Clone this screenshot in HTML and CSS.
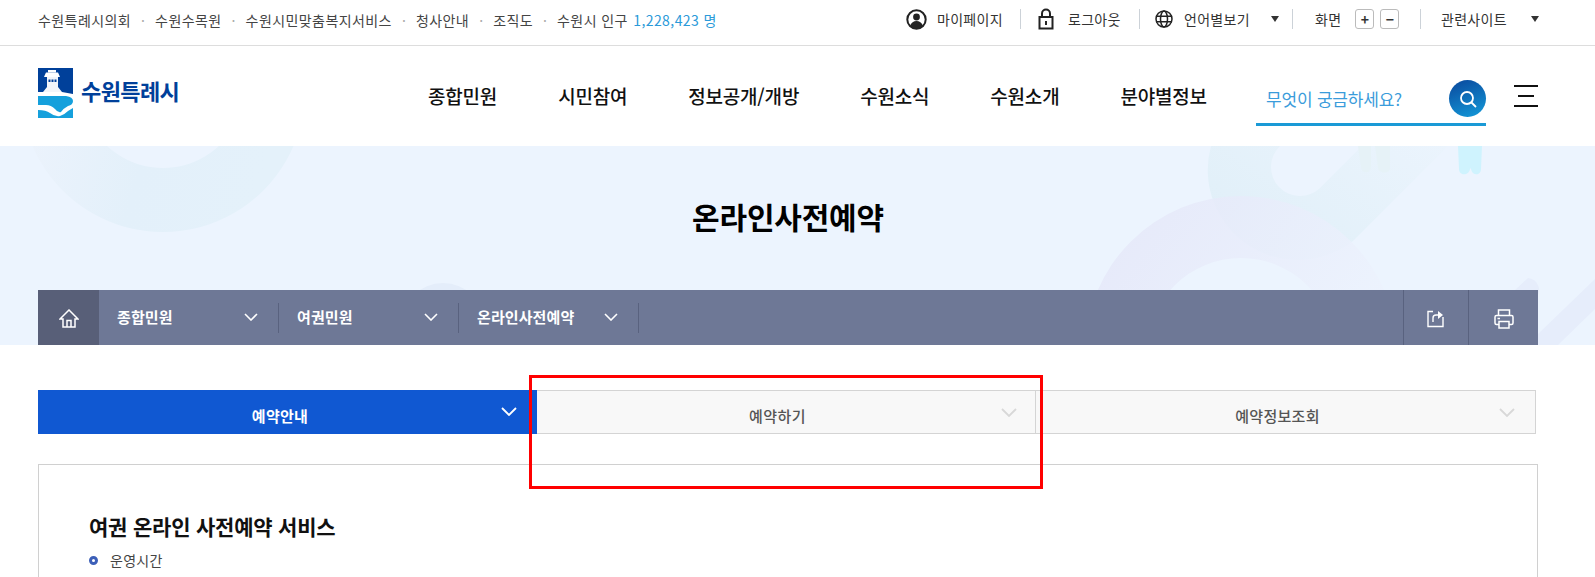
FILE: index.html
```html
<!DOCTYPE html>
<html lang="ko">
<head>
<meta charset="utf-8">
<title>온라인사전예약</title>
<link rel="stylesheet" href="styles.css">
</head>
<body>
<div class="page">
  <div class="topbar">
    <ul class="toplinks">
      <li>수원특례시의회</li>
      <li>수원수목원</li>
      <li>수원시민맞춤복지서비스</li>
      <li>청사안내</li>
      <li>조직도</li>
      <li>수원시 인구 <b class="pop">1,228,423 명</b></li>
    </ul>
    <div class="tools">
      <div class="tool t-my">
        <svg class="ico" width="21" height="21" viewBox="0 0 21 21"><circle cx="10.5" cy="10.5" r="9.2" fill="none" stroke="#222" stroke-width="2"/><circle cx="10.5" cy="8" r="3.4" fill="#222"/><path d="M4 17c1.2-3.6 3.6-5 6.5-5s5.300 1.400 6.500 5c-1.800 1.800-4 2.700-6.500 2.700S5.800 18.800 4 17z" fill="#222"/></svg>
        <span>마이페이지</span>
      </div>
      <div class="tool t-log">
        <svg class="ico" width="16" height="22" viewBox="0 0 16 22"><path d="M4 9V5.500a4 4 0 0 1 8 0V9" fill="none" stroke="#222" stroke-width="2"/><rect x="1.500" y="9" width="13" height="11.500" fill="none" stroke="#222" stroke-width="2"/><rect x="7" y="13" width="2" height="4" fill="#222"/></svg>
        <span>로그아웃</span>
      </div>
      <div class="tool t-lang">
        <svg class="ico" width="18" height="18" viewBox="0 0 18 18" fill="none" stroke="#222" stroke-width="1.500"><circle cx="9" cy="9" r="8"/><ellipse cx="9" cy="9" rx="3.500" ry="8"/><path d="M1 6.200h16M1 11.800h16"/></svg>
        <span>언어별보기</span>
        <i class="tri"></i>
      </div>
      <div class="tool t-zoom">
        <span class="zlabel">화면</span>
        <span class="zbtn">+</span>
        <span class="zbtn">−</span>
      </div>
      <div class="tool t-rel">
        <span>관련사이트</span>
        <i class="tri"></i>
      </div>
    </div>
  </div>

  <header class="header">
    <div class="logo">
      <svg width="35" height="50" viewBox="0 0 35 50">
        <rect width="35" height="50" fill="#00409a"/>
        <path d="M0 24h24l11 2v24H0z" fill="#fff"/>
        <rect x="10" y="2" width="8" height="2.500" fill="#fff"/>
        <path d="M6 9l2-4.500h12l2 4.500z" fill="#fff"/>
        <path d="M9 9h11v10l4 5H5l4-5z" fill="#f2f5fa"/>
        <rect x="10.500" y="11.500" width="2" height="2.500" fill="#00409a"/>
        <rect x="13.500" y="11.500" width="2" height="2.500" fill="#00409a"/>
        <rect x="16.500" y="11.500" width="2" height="2.500" fill="#00409a"/>
        <path d="M0 28H28Q35 29 35 33Q35 37 30 38Q26 40 23 44Q20 45 17 41Q13 37 8 37H0z" fill="#15a0dc"/>
        <path d="M0 42Q8 42 12 45Q17 49 22 48Q26 47 30 43L35 40V50H0z" fill="#15a0dc"/>
      </svg>
      <span class="logo-text">수원특례시</span>
    </div>
    <nav class="gnb">
      <a>종합민원</a>
      <a>시민참여</a>
      <a>정보공개/개방</a>
      <a>수원소식</a>
      <a>수원소개</a>
      <a>분야별정보</a>
    </nav>
    <div class="search">
      <span class="ph">무엇이 궁금하세요?</span>
      <span class="sbtn">
        <svg width="20" height="20" viewBox="0 0 20 20" fill="none" stroke="#fff" stroke-width="1.800"><circle cx="9" cy="9" r="6"/><path d="M13.500 13.500l4.500 4.500"/></svg>
      </span>
    </div>
    <div class="burger"><i></i><i class="mid"></i><i></i></div>
  </header>

  <section class="hero">
    <svg class="hero-bg" width="1595" height="199" viewBox="0 146 1595 199">
      <defs>
        <linearGradient id="gl" x1="0" y1="0" x2="1" y2="0.300"><stop offset="0" stop-color="#f0f4fd"/><stop offset=".6" stop-color="#e3f0fa"/><stop offset="1" stop-color="#e4f1fa"/></linearGradient>
        <linearGradient id="gb" x1="0" y1="0.700" x2="1" y2="0"><stop offset="0" stop-color="#e0eff8"/><stop offset="1" stop-color="#ebf4fd"/></linearGradient>
        <linearGradient id="gp" x1="0" y1="0" x2="1" y2="0.400"><stop offset="0" stop-color="#e4e6f8"/><stop offset="1" stop-color="#ecf2fd"/></linearGradient>
      </defs>
      <path fill-rule="evenodd" d="M163 -52a142 142 0 1 0 .01 0zM163 4a82 82 0 1 1 -.01 0z" fill="url(#gl)"/>
      <circle cx="443" cy="325" r="42" fill="#e4edfa"/>
      <path fill-rule="evenodd" d="M1211 146A90 90 0 0 0 1353 241L1448 146zM1280 146A28 28 0 0 0 1320 188L1362 146z" fill="url(#gb)"/>
      <path d="M1358 146h13v20c0 8-9 8-10 2zM1375 146h15v22c0 6-11 6-12 0z" fill="#e6f2f7"/>
      <path fill-rule="evenodd" d="M1085 352a156 156 0 0 1 312 0h-62a94 94 0 0 0-188 0z" fill="url(#gp)" fill-opacity=".85"/>
      <path d="M1458 146h24l-1 23c0 7-9 7-10 0 0-1-1-1-1 0-1 7-11 7-11 0z" fill="#cff3fe"/>
      <path d="M1528 278a12 12 0 0 1 8 20l-40 47h-40zM1595 279L1538 334V345H1558L1595 309z" fill="#e6edfb"/>
    </svg>
    <h1 class="hero-title">온라인사전예약</h1>
    <div class="crumbs">
      <a class="home">
        <svg width="20" height="19" viewBox="0 0 20 19" fill="none" stroke="#fff" stroke-width="1.500"><path d="M1 10L10 1l9 9H16v8H4v-8z"/><path d="M8 18v-6.500h4V18"/></svg>
      </a>
      <div class="crumb"><span>종합민원</span><svg class="chev" width="14" height="8" viewBox="0 0 14 8"><path d="M1 1l6 6 6-6" fill="none" stroke="#fff" stroke-width="1.600"/></svg></div>
      <div class="crumb"><span>여권민원</span><svg class="chev" width="14" height="8" viewBox="0 0 14 8"><path d="M1 1l6 6 6-6" fill="none" stroke="#fff" stroke-width="1.600"/></svg></div>
      <div class="crumb"><span>온라인사전예약</span><svg class="chev" width="14" height="8" viewBox="0 0 14 8"><path d="M1 1l6 6 6-6" fill="none" stroke="#fff" stroke-width="1.600"/></svg></div>
      <a class="act act-share">
        <svg width="18" height="18" viewBox="0 0 18 18" fill="none" stroke="#fff" stroke-width="1.400"><path d="M6 1.500H1v15h15V7"/><path d="M6 12V8c0-2 1.500-3 3-3h3"/><path d="M11 1l5 4-5 4z" fill="#fff" stroke="none"/></svg>
      </a>
      <a class="act">
        <svg width="20" height="20" viewBox="0 0 20 20" fill="none" stroke="#fff" stroke-width="1.500"><path d="M4.500 6.500V1h11v5.500"/><rect x="1" y="6.500" width="18" height="9" rx="1.500"/><rect x="5" y="12.500" width="10" height="6.500" fill="#6e7896"/><path d="M3.500 9.500H6"/></svg>
      </a>
    </div>
  </section>

  <main class="main">
    <div class="tabs">
      <a class="tab on"><span>예약안내</span><svg class="tchev" width="16" height="9" viewBox="0 0 16 9"><path d="M1 1l7 7 7-7" fill="none" stroke="#fff" stroke-width="1.800"/></svg></a>
      <a class="tab two"><span>예약하기</span><svg class="tchev" width="16" height="9" viewBox="0 0 16 9"><path d="M1 1l7 7 7-7" fill="none" stroke="#d8d8d8" stroke-width="1.800"/></svg></a>
      <a class="tab three"><span>예약정보조회</span><svg class="tchev" width="16" height="9" viewBox="0 0 16 9"><path d="M1 1l7 7 7-7" fill="none" stroke="#d8d8d8" stroke-width="1.800"/></svg></a>
    </div>
    <div class="panel">
      <h2 class="panel-title">여권 온라인 사전예약 서비스</h2>
      <p class="bullet">운영시간</p>
    </div>
    <div class="redbox"></div>
  </main>
</div>
</body>
</html>
```
FILE: styles.css
```css
* { box-sizing: border-box; }
html, body { margin: 0; padding: 0; height: 577px; overflow: hidden; background: #fff; }
body { font-family: "Noto Sans CJK KR", "Noto Sans", sans-serif; color: #222; }
ul { list-style: none; margin: 0; padding: 0; }
h1, h2, p { margin: 0; }
.page { width: 1595px; height: 577px; overflow: hidden; }

.topbar { height: 46px; border-bottom: 1px solid #ddd; padding: 0 0 5px 38px; display: flex; align-items: center; font-size: 14px; color: #444; letter-spacing: .42px; }
.toplinks { display: flex; width: 868px; flex: none; }
.toplinks li { margin-right: 24px; position: relative; }
.toplinks li + li::before { content: "·"; position: absolute; left: -14px; color: #aaa; }
.pop { font-weight: 400; color: #2a9ad9; margin-left: 1px; }
.tools { display: flex; align-items: center; height: 20px; color: #333; margin-bottom: 2px; letter-spacing: .3px; }
.tool { display: flex; align-items: center; height: 20px; border-left: 1px solid #ccd2d8; }
.tool:first-child { border-left: 0; }
.tool .ico { flex: none; }
.t-my { width: 114px; gap: 10px; }
.t-log { width: 119px; padding-left: 17px; gap: 14px; }
.t-lang { width: 153px; padding-left: 15px; gap: 11px; position: relative; }
.t-zoom { width: 128px; padding-left: 22px; }
.t-rel { padding-left: 20px; position: relative; width: 120px; }
.tri { position: absolute; width: 0; height: 0; border-left: 4px solid transparent; border-right: 4px solid transparent; border-top: 6px solid #333; top: 7px; }
.t-lang .tri { left: 131px; }
.t-rel .tri { left: 110px; }
.zlabel { margin-right: 8px; }
.zbtn { width: 19px; height: 20px; border: 1px solid #bbb; border-radius: 3px; display: flex; align-items: center; justify-content: center; font-size: 14px; font-weight: 700; line-height: 1; color: #333; letter-spacing: 0; margin-left: 6px; }

.header { height: 100px; padding-left: 38px; display: flex; align-items: flex-start; }
.logo { display: flex; align-items: center; width: 390px; flex: none; margin-top: 22px; gap: 8px; }
.logo-text { font-size: 22px; font-weight: 700; color: #00409a; letter-spacing: -.6px; padding-bottom: 6px; }
.gnb { display: flex; gap: 61px; width: 828px; flex: none; margin-top: 36px; font-size: 19px; font-weight: 500; color: #111; letter-spacing: -.2px; line-height: 28px; }
.search { width: 230px; height: 46px; margin-top: 34px; padding-left: 10px; border-bottom: 3px solid #1a9ad6; display: flex; justify-content: space-between; flex: none; }
.ph { font-size: 17px; color: #3a9cdb; line-height: 38px; letter-spacing: -.2px; }
.sbtn { width: 37px; height: 37px; border-radius: 50%; background: linear-gradient(160deg, #0a479c, #139bda); display: flex; align-items: center; justify-content: center; }
.burger { width: 24px; margin-left: 28px; margin-top: 39px; display: flex; flex-direction: column; align-items: center; gap: 8px; }
.burger i { display: block; width: 24px; height: 2px; background: #111; }
.burger i.mid { width: 16px; }

.hero { height: 199px; background: #ecf4fe; position: relative; padding-top: 48px; overflow: hidden; }
.hero-bg { position: absolute; left: 0; top: 0; }
.hero-title { position: relative; height: 96px; width: 1500px; margin-left: 38px; text-align: center; font-size: 30px; font-weight: 700; color: #000; line-height: 44px; letter-spacing: -.2px; }
.crumbs { position: relative; margin: 0 0 0 38px; width: 1500px; height: 55px; background: #6e7896; display: flex; align-items: center; color: #fff; }
.home { width: 61px; height: 55px; background: #585f78; display: flex; align-items: center; justify-content: center; flex: none; padding-top: 2px; }
.crumb { width: 180px; height: 30px; padding: 0 20px 0 18px; border-right: 1px solid #59627f; display: flex; align-items: center; justify-content: space-between; font-size: 15px; font-weight: 700; flex: none; letter-spacing: .1px; }
.crumb span { padding-bottom: 3px; }
.chev { margin-bottom: 2px; }
.act { width: 65px; height: 55px; border-left: 1px solid #59627f; display: flex; align-items: center; justify-content: center; flex: none; padding-top: 2px; }
.act-share { margin-left: auto; }
.act:last-child { width: 70px; }

.main { position: relative; padding: 45px 0 0 38px; }
.tabs { display: flex; width: 1498px; height: 44px; }
.tab { width: 499px; height: 44px; flex: none; display: flex; align-items: center; justify-content: center; position: relative; font-size: 15px; font-weight: 500; padding-top: 7px; background: #f8f8f8; border: 1px solid #d4d4d4; border-left: 0; color: #555; letter-spacing: .45px; }
.tab.on { background: #1058d2; border: 0; color: #fff; font-weight: 700; padding-right: 15px; letter-spacing: .3px; }
.tab.two { padding-right: 17px; }
.tab.three { width: 500px; padding-right: 16px; letter-spacing: .3px; }
.tchev { position: absolute; right: 20px; top: 17px; }
.tab.two .tchev { right: 18px; }
.panel { width: 1500px; height: 200px; margin-top: 30px; border: 1px solid #d0d0d0; padding: 45px 0 0 50px; }
.panel-title { font-size: 21px; font-weight: 700; color: #111; line-height: 32px; letter-spacing: -.2px; }
.bullet { position: relative; margin-top: 7px; padding-left: 21px; font-size: 14px; color: #444; line-height: 22px; letter-spacing: .3px; }
.bullet::before { content: ""; position: absolute; left: 0; top: 7px; width: 3px; height: 3px; border: 3px solid #3c5fb8; border-radius: 50%; }
.redbox { position: absolute; left: 529px; top: 30px; width: 514px; height: 114px; border: 3px solid #f00; }
```
